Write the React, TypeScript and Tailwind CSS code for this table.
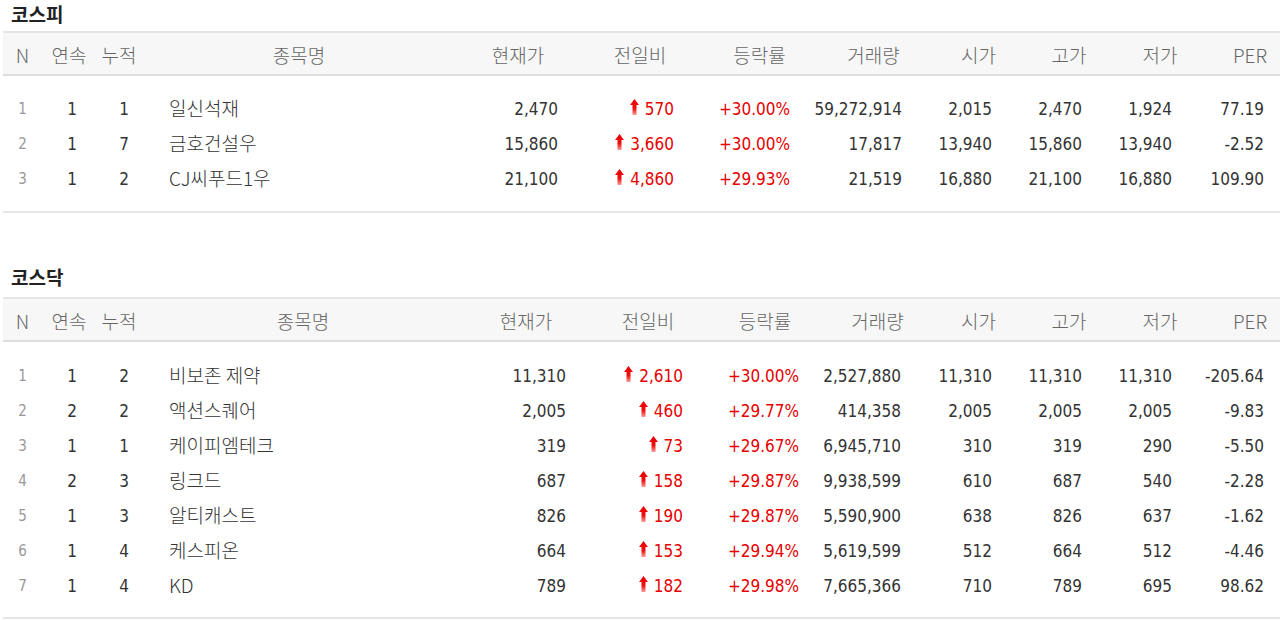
import React from "react";

type Col = { w: string; h: string; v: string };

type Row = {
  n: number;
  streak: number;
  total: number;
  name: string;
  price: string;
  diff: string;
  rate: string;
  vol: string;
  open: string;
  high: string;
  low: string;
  per: string;
};

// shared first three columns
const lead: Col[] = [
  { w: "w-[39px]", h: "text-center", v: "justify-center text-[15px] text-[#999]" },
  { w: "w-[54px]", h: "text-center", v: "justify-center pl-[6px]" },
  { w: "w-[46px]", h: "text-center", v: "justify-center pl-[10px]" },
];

const kospiCols: Col[] = [
  ...lead,
  { w: "w-[314px]", h: "text-center", v: "justify-start pl-[27px]" },
  { w: "w-[124px]", h: "text-center", v: "justify-end pr-[22px]" },
  { w: "w-[120px]", h: "text-center", v: "justify-end pr-[26px] text-[#e60000]" },
  { w: "w-[110px]", h: "text-center pl-[9px]", v: "justify-end pr-[20px] text-[#e60000]" },
  { w: "w-[110px]", h: "text-center pl-[17px]", v: "justify-end pr-[18px]" },
  { w: "w-[90px]", h: "text-center pl-[27px]", v: "justify-end pr-[18px]" },
  { w: "w-[90px]", h: "text-center pl-[28px]", v: "justify-end pr-[18px]" },
  { w: "w-[90px]", h: "text-center pl-[30px]", v: "justify-end pr-[18px]" },
  { w: "w-[90px]", h: "text-center pl-[30px]", v: "justify-end pr-[16px]" },
];

const kosdaqCols: Col[] = [
  ...lead,
  { w: "w-[322px]", h: "text-center", v: "justify-start pl-[27px]" },
  { w: "w-[126px]", h: "text-center pr-[2px]", v: "justify-end pr-[24px]" },
  { w: "w-[120px]", h: "text-center pr-[4px]", v: "justify-end pr-[27px] text-[#e60000]" },
  { w: "w-[110px]", h: "text-center", v: "justify-end pr-[21px] text-[#e60000]" },
  { w: "w-[100px]", h: "text-center pl-[15px]", v: "justify-end pr-[19px]" },
  { w: "w-[90px]", h: "text-center pl-[27px]", v: "justify-end pr-[18px]" },
  { w: "w-[90px]", h: "text-center pl-[28px]", v: "justify-end pr-[18px]" },
  { w: "w-[90px]", h: "text-center pl-[30px]", v: "justify-end pr-[18px]" },
  { w: "w-[90px]", h: "text-center pl-[30px]", v: "justify-end pr-[16px]" },
];

const headers = ["N", "연속", "누적", "종목명", "현재가", "전일비", "등락률", "거래량", "시가", "고가", "저가", "PER"];

const kospi: Row[] = [
  { n: 1, streak: 1, total: 1, name: "일신석재", price: "2,470", diff: "570", rate: "+30.00%", vol: "59,272,914", open: "2,015", high: "2,470", low: "1,924", per: "77.19" },
  { n: 2, streak: 1, total: 7, name: "금호건설우", price: "15,860", diff: "3,660", rate: "+30.00%", vol: "17,817", open: "13,940", high: "15,860", low: "13,940", per: "-2.52" },
  { n: 3, streak: 1, total: 2, name: "CJ씨푸드1우", price: "21,100", diff: "4,860", rate: "+29.93%", vol: "21,519", open: "16,880", high: "21,100", low: "16,880", per: "109.90" },
];

const kosdaq: Row[] = [
  { n: 1, streak: 1, total: 2, name: "비보존 제약", price: "11,310", diff: "2,610", rate: "+30.00%", vol: "2,527,880", open: "11,310", high: "11,310", low: "11,310", per: "-205.64" },
  { n: 2, streak: 2, total: 2, name: "액션스퀘어", price: "2,005", diff: "460", rate: "+29.77%", vol: "414,358", open: "2,005", high: "2,005", low: "2,005", per: "-9.83" },
  { n: 3, streak: 1, total: 1, name: "케이피엠테크", price: "319", diff: "73", rate: "+29.67%", vol: "6,945,710", open: "310", high: "319", low: "290", per: "-5.50" },
  { n: 4, streak: 2, total: 3, name: "링크드", price: "687", diff: "158", rate: "+29.87%", vol: "9,938,599", open: "610", high: "687", low: "540", per: "-2.28" },
  { n: 5, streak: 1, total: 3, name: "알티캐스트", price: "826", diff: "190", rate: "+29.87%", vol: "5,590,900", open: "638", high: "826", low: "637", per: "-1.62" },
  { n: 6, streak: 1, total: 4, name: "케스피온", price: "664", diff: "153", rate: "+29.94%", vol: "5,619,599", open: "512", high: "664", low: "512", per: "-4.46" },
  { n: 7, streak: 1, total: 4, name: "KD", price: "789", diff: "182", rate: "+29.98%", vol: "7,665,366", open: "710", high: "789", low: "695", per: "98.62" },
];

const korean = "font-['Noto_Sans_CJK_KR',sans-serif] font-stretch-normal text-[19px] font-light";

const UpArrow = () => (
  <svg width="9" height="16" viewBox="0 0 9 16" className="mb-[5px] shrink-0">
    <defs>
      <linearGradient id="upg" x1="0" y1="0" x2="0" y2="1">
        <stop offset="0" stopColor="#e80000" />
        <stop offset="0.6" stopColor="#f01010" />
        <stop offset="1" stopColor="#ff9a9a" />
      </linearGradient>
    </defs>
    <path d="M4.5 0 L9 6 H6.5 V16 H2.5 V6 H0 Z" fill="url(#upg)" />
  </svg>
);

const Table = ({ title, cols, rows, first }: { title: string; cols: Col[]; rows: Row[]; first?: boolean }) => (
  <div>
    <div
      className={`pl-[8px] font-['Noto_Sans_CJK_KR',sans-serif] text-[19px] font-bold text-[#222] leading-[28px] ${first ? "mb-[3px]" : "mt-[50px] mb-[6px]"}`}
    >
      {title}
    </div>
    <div className="flex h-[45px] items-center border-t-2 border-b-2 border-t-[#e6e6e6] border-b-[#dedede] bg-[#f7f7f7] text-[#666] pt-[4px]">
      {headers.map((h, i) => (
        <div key={h} className={`${cols[i].w} ${cols[i].h} ${korean} shrink-0`}>
          {h}
        </div>
      ))}
    </div>
    <div className={`border-b-2 border-[#e6e6e6] ${first ? "pt-[16px] pb-[14px]" : "pt-[17px] pb-[13px]"}`}>
      {rows.map((r) => {
        const cells = [
          r.n, r.streak, r.total, r.name, r.price, r.diff, r.rate, r.vol, r.open, r.high, r.low, r.per,
        ];
        return (
          <div key={r.n} className="flex h-[35px] items-center text-[#333]">
            {cells.map((c, i) => (
              <div key={i} className={`${cols[i].w} ${cols[i].v} flex items-center gap-[6px] shrink-0`}>
                {i === 5 && <UpArrow />}
                <span className={i === 3 ? `${korean} -mt-[3px]` : ""}>{c}</span>
              </div>
            ))}
          </div>
        );
      })}
    </div>
  </div>
);

export default function App() {
  return (
    <div className="w-[1280px] bg-white pl-[3px] text-[17px] font-['DejaVu_Sans','Noto_Sans_CJK_KR',sans-serif] font-stretch-condensed">
      <Table title="코스피" cols={kospiCols} rows={kospi} first />
      <Table title="코스닥" cols={kosdaqCols} rows={kosdaq} />
    </div>
  );
}
